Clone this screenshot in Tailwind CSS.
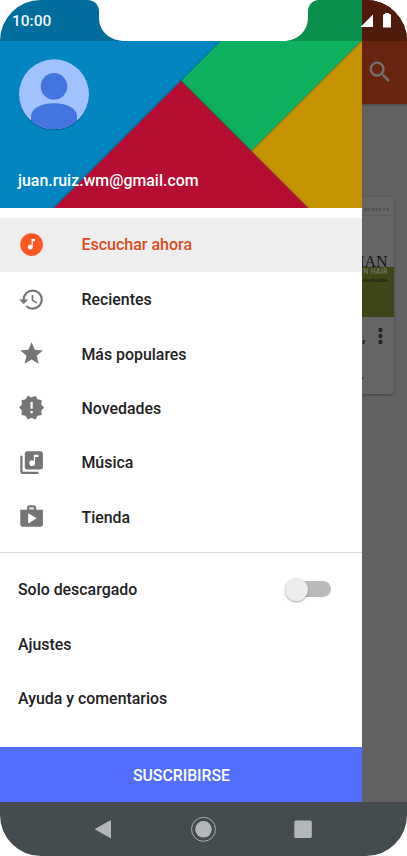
<!DOCTYPE html>
<html lang="es">
<head>
<meta charset="utf-8">
<title>Música</title>
<script src="https://cdn.jsdelivr.net/npm/@tailwindcss/browser@4"></script>
</head>
<body class="bg-white overflow-hidden">
<div class="relative w-[407px] h-[856px] rounded-[41px] overflow-hidden flex flex-col font-['Roboto',sans-serif] font-medium text-[15.9px] text-[#212121]">
  <div class="flex h-[801.5px] shrink-0">
    <aside class="w-[362px] shrink-0 bg-white flex flex-col">
      <header class="relative h-[208px] shrink-0 bg-[#0285c0]">
        <svg class="absolute inset-0" width="362" height="208" viewBox="0 0 362 208">
          <defs><filter id="sh" x="-10%" y="-10%" width="120%" height="120%"><feDropShadow dx="0" dy="0" stdDeviation="1.6" flood-color="#000" flood-opacity=".38"/></filter></defs>
          <path filter="url(#sh)" fill="#c69300" d="M362 40 251 151 308 208H370V32z"/>
          <path fill="#0ab05e" d="M262 0 181 81 251 151 362 40V0z" filter="url(#sh)"/>
          <path filter="url(#sh)" fill="#b60d33" d="M181 81 48 214H314z"/>
        </svg>
        <div class="relative h-full flex flex-col justify-between pt-[59px] pl-[18px] pb-[17px]">
          <div class="w-[72px] h-[72px]">
            <svg class="-ml-[0.5px]" width="72" height="72" viewBox="0 0 72 72"><defs><clipPath id="av"><circle cx="36" cy="35.3" r="35"/></clipPath></defs><circle cx="36" cy="36.5" r="35" fill="#005f95"/><circle cx="36" cy="35.3" r="35" fill="#a1c2fe"/><g clip-path="url(#av)" fill="#4374e0"><circle cx="36" cy="27.3" r="13.3"/><path d="M13 72V57C14 40 58 40 59 57V72z"/></g></svg>
          </div>
          <div class="text-white leading-[20px] text-[15.9px]">juan.ruiz.wm@gmail.com</div>
        </div>
      </header>
      <nav class="pt-[9.6px] pb-[8.2px] border-b border-[#dcdcdc] *:flex *:items-center *:h-[54.4px] *:pl-[17.7px] *:gap-[36.6px]">
        <a class="bg-[#eeeeee] text-[#dc4b20]">
          <svg class="shrink-0" width="27.2" height="27.2" viewBox="0 0 24 24"><circle cx="12" cy="12" r="10" fill="#ff5722"/><path fill="#fff" d="M12 7h3v2h-2v5.2a2.1 2.1 0 1 1-1-1.8z"/></svg><span class="pt-[1.4px] text-[16px]">Escuchar ahora</span></a>
        <a><svg class="shrink-0" width="27.2" height="27.2" viewBox="0 0 24 24" fill="#757575"><path d="M13 3a9 9 0 0 0-9 9H1l3.89 3.89.07.14L9 12H6c0-3.87 3.13-7 7-7s7 3.13 7 7-3.13 7-7 7c-1.93 0-3.68-.79-4.94-2.06l-1.42 1.42A8.954 8.954 0 0 0 13 21a9 9 0 0 0 0-18zm-1 5v5l4.28 2.54.72-1.21-3.5-2.08V8H12z"/></svg><span class="pt-[1.4px]">Recientes</span></a>
        <a><svg class="shrink-0" width="27.2" height="27.2" viewBox="0 0 24 24" fill="#757575"><path d="M12 17.27 18.18 21l-1.64-7.03L22 9.24l-7.19-.61L12 2 9.19 8.63 2 9.24l5.46 4.73L5.82 21z"/></svg><span class="pt-[2px]">Más populares</span></a>
        <a><svg class="shrink-0" width="27.2" height="27.2" viewBox="0 0 24 24" fill="#757575"><path d="m23 12-2.44-2.78.34-3.68-3.61-.82-1.89-3.18L12 3 8.6 1.54 6.71 4.72l-3.61.81.34 3.68L1 12l2.44 2.78-.34 3.69 3.61.82 1.89 3.18L12 21l3.4 1.46 1.89-3.18 3.61-.82-.34-3.68zm-10 5h-2v-2h2zm0-4h-2V7h2z"/></svg><span class="pt-[1.4px]">Novedades</span></a>
        <a><svg class="shrink-0" width="27.2" height="27.2" viewBox="0 0 24 24" fill="#757575"><path d="M20 2H8c-1.1 0-2 .9-2 2v12c0 1.1.9 2 2 2h12c1.1 0 2-.9 2-2V4c0-1.1-.9-2-2-2zm-2 5h-3v5.5a2.5 2.5 0 0 1-5 0 2.5 2.5 0 0 1 2.5-2.5c.57 0 1.08.19 1.5.51V5h4zM4 6H2v14c0 1.1.9 2 2 2h14v-2H4z"/></svg><span class="pt-[1.4px]">Música</span></a>
        <a><svg class="shrink-0" width="27.2" height="27.2" viewBox="0 0 24 24" fill="#757575"><path fill="#bdbdbd" d="M9 5h6v2H9z"/><path d="M16 6V4c0-1.11-.89-2-2-2h-4c-1.11 0-2 .89-2 2v2H2v13c0 1.11.89 2 2 2h16c1.11 0 2-.89 2-2V6zm-6-2h4v2h-4zM9 18V9l7.5 4.5z"/></svg><span class="pt-[1.4px]">Tienda</span></a>
      </nav>
      <section class="pt-[9px] grow *:flex *:items-center *:h-[54.4px] *:pl-[18px]">
        <div class="justify-between pr-[31px]"><span class="pt-[1.4px]">Solo descargado</span>
          <div class="w-[46px] h-[16px] rounded-full bg-[#bababa] flex items-center"><div class="-ml-[0.5px] w-[23px] h-[23px] shrink-0 rounded-full bg-[#ececea] shadow-[0_1px_2px_rgba(0,0,0,0.35)]"></div></div>
        </div>
        <div><span class="pt-[2px]">Ajustes</span></div>
        <div><span class="pt-[1.4px]">Ayuda y comentarios</span></div>
      </section>
      <button class="h-[54.2px] shrink-0 bg-[#526eff] text-white pt-[2px] pl-px text-[15.8px]">SUSCRIBIRSE</button>
    </aside>
    <main class="w-[45px] bg-[#626262] overflow-hidden">
      <div class="h-[104px] bg-[#682411] flex flex-col shadow-[0_1px_2px_rgba(0,0,0,0.3)]">
        <div class="h-[41px] bg-[#511b0b] shrink-0"></div>
        <svg class="ml-[4px] mt-[17px]" width="28" height="28" viewBox="0 0 24 24" fill="#727272"><path d="M15.5 14h-.79l-.28-.27A6.47 6.47 0 0 0 16 9.5 6.5 6.5 0 1 0 9.5 16c1.61 0 3.09-.59 4.23-1.57l.27.28v.79l5 4.99L20.49 19zm-6 0a4.5 4.5 0 1 1 0-9 4.5 4.5 0 0 1 0 9z"/></svg>
      </div>
      <article class="mt-[93px] w-[31.5px] h-[197px] bg-[#666666] rounded-r-[3px] shadow-[0_1px_3px_rgba(0,0,0,0.35)] overflow-hidden flex flex-col">
        <div class="h-[19px] shrink-0 border-b border-[#5c5c5c] flex justify-end items-center pt-[9px] pb-[3px] pr-[4px] text-[4.6px] leading-[5px] tracking-[0.5px] font-bold text-[#4c4136] font-['Liberation_Serif',serif] whitespace-nowrap">DERUEST</div>
        <div class="h-[51px] shrink-0 flex justify-end items-end pr-[6px] text-[16px] leading-[13px] text-[#171717] font-normal font-['Liberation_Serif',serif]"><span class="relative z-10 top-px">MAN</span></div>
        <div class="h-[50px] shrink-0 bg-[#3c4617] flex flex-col items-end pr-[6px] whitespace-nowrap">
          <div class="text-[6.6px] leading-[7px] mt-px tracking-[0.3px] font-bold text-[#777769] font-['Lato',sans-serif]">N HAIR</div>
          <div class="text-[4px] leading-[5px] mt-[3px] font-bold italic text-[#111] font-['Liberation_Serif',serif]">ADAPTACIÓN</div>
        </div>
        <div class="flex justify-between pr-[11px] pt-[10px]">
          <div class="flex flex-col text-[#202020]"><span class="text-[16px] leading-[20px]">,</span><span class="text-[11px] leading-[12px] mt-[23px] -ml-[1px]">.</span></div>
          <svg width="5" height="18" viewBox="0 0 5 18" fill="#252525"><circle cx="2.5" cy="3" r="2.2"/><circle cx="2.5" cy="9" r="2.2"/><circle cx="2.5" cy="15" r="2.2"/></svg>
        </div>
      </article>
    </main>
  </div>
  <footer class="grow bg-[#444c50]">
    <svg width="407" height="54.5" viewBox="0 0 407 54.5" fill="#b3b7b7"><path stroke="#b3b7b7" stroke-linejoin="round" d="M95.5 27.2 110.5 18.7V35.7z"/><circle cx="203.5" cy="27.3" r="8.3"/><circle cx="203.5" cy="27.3" r="12" fill="none" stroke="#a8abac"/><rect x="294.3" y="18.5" width="17.5" height="17.5" rx="1.5"/></svg>
  </footer>
  <div class="absolute top-0 left-0 w-[362px] h-[41px] bg-black/18"></div>
  <svg class="absolute top-0 left-0" width="407" height="42" viewBox="0 0 407 42" fill="#fff"><path d="M87 0C95 0 99 5 99 12V18C99 32 111 41 125 41H283C298 41 308 31 308 17V12C308 5 312 0 319 0z"/><path d="M373 14.5V27H360.5z"/><path d="M385 14V13H389V14C390.500 14 391 14.500 391 15.500V27.500H383V15.500C383 14.500 383.500 14 385 14z"/></svg>
  <div class="absolute top-[11px] left-[12px] text-white/95 text-[15.5px] leading-[20px]">10:00</div>
</div>
</body>
</html>
